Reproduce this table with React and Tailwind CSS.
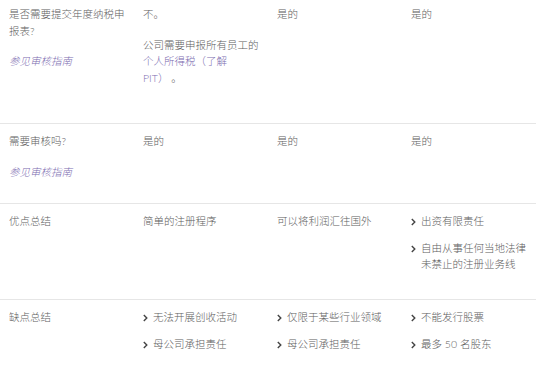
import React from 'react';

const Chevron = () => (
  <svg width="6" height="8" viewBox="0 0 6 8" className="shrink-0 mt-[5px]">
    <polyline points="0.8,1 3.8,4 0.8,7" fill="none" stroke="#444" strokeWidth="1.4" />
  </svg>
);

const Bullets = ({ items }) => (
  <ul className="flex flex-col gap-[10px]">
    {items.map((item, i) => (
      <li key={i} className="flex gap-[4px]">
        <Chevron />
        <span>{item}</span>
      </li>
    ))}
  </ul>
);

const Guide = () => <p className="mt-[14px] italic text-[#7b6bb0]">参见审核指南</p>;

const Row = ({ cells, className }) => (
  <div className={`grid grid-cols-4 border-b border-[#e6e6e6] ${className}`}>
    {cells.map((cell, i) => (
      <div key={i} className="pl-[9px] pr-[6px]">{cell}</div>
    ))}
  </div>
);

export default function App() {
  return (
    <div
      className="w-[536px] bg-white text-[10.5px] leading-[16.5px] text-[#5e5e5e] font-light"
      style={{ fontFamily: '"Lato", "Noto Sans CJK SC", sans-serif' }}
    >
      <Row
        className="h-[124px] pt-[6px]"
        cells={[
          <>
            <p>是否需要提交年度纳税申报表?</p>
            <Guide />
          </>,
          <>
            <p>不。</p>
            <p className="mt-[14px]">
              公司需要申报所有员工的<br />
              <span className="text-[#7b6bb0]">个人所得税（了解<br />PIT）</span> 。
            </p>
          </>,
          <p>是的</p>,
          <p>是的</p>,
        ]}
      />
      <Row
        className="h-[80px] pt-[9px]"
        cells={[
          <>
            <p>需要审核吗?</p>
            <Guide />
          </>,
          <p>是的</p>,
          <p>是的</p>,
          <p>是的</p>,
        ]}
      />
      <Row
        className="h-[96px] pt-[9px]"
        cells={[
          <p>优点总结</p>,
          <p>简单的注册程序</p>,
          <p>可以将利润汇往国外</p>,
          <Bullets items={['出资有限责任', <>自由从事任何当地法律<br />未禁止的注册业务线</>]} />,
        ]}
      />
      <Row
        className="h-[80px] pt-[9px]"
        cells={[
          <p>缺点总结</p>,
          <Bullets items={['无法开展创收活动', '母公司承担责任']} />,
          <Bullets items={['仅限于某些行业领域', '母公司承担责任']} />,
          <Bullets items={['不能发行股票', '最多 50 名股东']} />,
        ]}
      />
    </div>
  );
}
